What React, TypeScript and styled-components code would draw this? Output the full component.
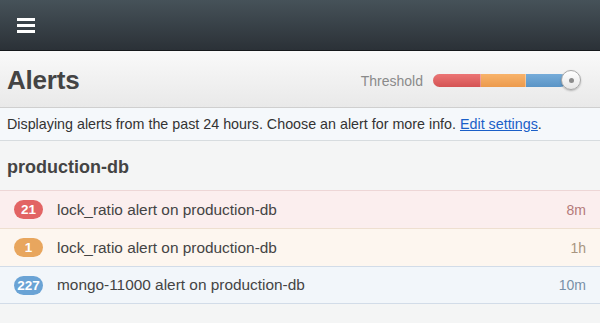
import React from "react";
import styled, { createGlobalStyle } from "styled-components";

const Global = createGlobalStyle`
  html, body { margin: 0; padding: 0; background: #f4f5f5; }
  body { font-family: "Helvetica Neue", "Liberation Sans", Arial, sans-serif; }
  * { box-sizing: border-box; }
`;

const Page = styled.div`
  width: 600px;
  height: 323px;
  background: #f4f5f5;
  overflow: hidden;
`;

const TopBar = styled.div`
  height: 51px;
  background: linear-gradient(#465259, #2b3137);
  border-bottom: 1px solid #15181b;
  display: flex;
  align-items: center;
  padding-left: 17px;
`;

const MenuButton = styled.div`
  width: 18px;
  display: flex;
  flex-direction: column;
  gap: 3px;
  span {
    display: block;
    height: 3px;
    background: #ffffff;
  }
`;

const Header = styled.div`
  height: 57px;
  background: linear-gradient(#f9f9f9, #e9e9e9);
  border-bottom: 1px solid #cfcfcf;
  display: flex;
  align-items: center;
  justify-content: space-between;
  padding: 2px 19px 0 7px;
`;

const Title = styled.h1`
  margin: 0;
  font-size: 26px;
  font-weight: bold;
  color: #444;
  letter-spacing: -0.2px;
`;

const ThresholdBox = styled.div`
  display: flex;
  align-items: center;
  gap: 10px;
`;

const ThresholdLabel = styled.span`
  font-size: 14px;
  color: #8a8a8a;
  padding-top: 2px;
`;

const Slider = styled.div`
  position: relative;
  width: 148px;
  height: 20px;
  display: flex;
  align-items: center;
`;

const Track = styled.div`
  display: flex;
  width: 134px;
  height: 13px;
  border-radius: 7px;
  overflow: hidden;
  box-shadow: inset 0 1px 1px rgba(0, 0, 0, 0.2);
`;

const Segment = styled.div<{ $w: number; $top: string; $bottom: string }>`
  width: ${(p) => p.$w}px;
  height: 100%;
  background: linear-gradient(${(p) => p.$top}, ${(p) => p.$bottom});
  border-right: 1px solid rgba(255, 255, 255, 0.35);
  &:last-child { border-right: none; }
`;

const Knob = styled.div`
  position: absolute;
  right: 0;
  top: 0;
  width: 20px;
  height: 20px;
  border-radius: 50%;
  background: linear-gradient(#ffffff, #e6e6e6);
  border: 1px solid #a8a8a8;
  box-shadow: 0 1px 2px rgba(0, 0, 0, 0.25);
  display: flex;
  align-items: center;
  justify-content: center;
  &::after {
    content: "";
    width: 5px;
    height: 5px;
    border-radius: 50%;
    background: #8a8a8a;
  }
`;

const InfoBar = styled.div`
  height: 33px;
  background: #f5f8fb;
  border-bottom: 1px solid #d7dcdf;
  display: flex;
  align-items: center;
  padding-left: 7px;
  font-size: 14.3px;
  color: #333;
  a {
    color: #1a5fc8;
    text-decoration: underline;
  }
`;

const GroupTitle = styled.h2`
  margin: 0;
  height: 49px;
  display: flex;
  align-items: center;
  padding: 4px 0 0 7px;
  font-size: 18px;
  font-weight: bold;
  color: #444;
`;

const List = styled.div`
  display: flex;
  flex-direction: column;
`;

type Level = "red" | "orange" | "blue";

const levels: Record<Level, { bg: string; border: string; badge: string; time: string }> = {
  red: { bg: "#fbeeee", border: "#edd6d6", badge: "#e26464", time: "#b47a7a" },
  orange: { bg: "#fdf6ef", border: "#eedfd0", badge: "#e8a65e", time: "#a89580" },
  blue: { bg: "#f2f6fa", border: "#d2dce8", badge: "#6aa3d5", time: "#7890a8" },
};

const Row = styled.div<{ $level: Level }>`
  height: 38px;
  display: flex;
  align-items: center;
  padding: 0 14px 0 14px;
  background: ${(p) => levels[p.$level].bg};
  border-top: 1px solid ${(p) => levels[p.$level].border};
  &:last-child {
    border-bottom: 1px solid ${(p) => levels[p.$level].border};
  }
`;

const BadgeCell = styled.div`
  width: 43px;
  flex: none;
  display: flex;
`;

const Badge = styled.span<{ $level: Level }>`
  min-width: 29px;
  height: 19px;
  padding: 0 3px;
  border-radius: 10px;
  background: ${(p) => levels[p.$level].badge};
  color: #fff;
  font-size: 13.5px;
  font-weight: bold;
  display: flex;
  align-items: center;
  justify-content: center;
`;

const RowText = styled.span`
  flex: 1;
  font-size: 15.4px;
  color: #444;
`;

const Time = styled.span<{ $level: Level }>`
  font-size: 14px;
  color: ${(p) => levels[p.$level].time};
`;

const alerts: { count: number; text: string; time: string; level: Level }[] = [
  { count: 21, text: "lock_ratio alert on production-db", time: "8m", level: "red" },
  { count: 1, text: "lock_ratio alert on production-db", time: "1h", level: "orange" },
  { count: 227, text: "mongo-11000 alert on production-db", time: "10m", level: "blue" },
];

export default function App() {
  return (
    <Page>
      <Global />
      <TopBar>
        <MenuButton>
          <span />
          <span />
          <span />
        </MenuButton>
      </TopBar>
      <Header>
        <Title>Alerts</Title>
        <ThresholdBox>
          <ThresholdLabel>Threshold</ThresholdLabel>
          <Slider>
            <Track>
              <Segment $w={48} $top="#ec7575" $bottom="#d45353" />
              <Segment $w={45} $top="#f8b36a" $bottom="#ec9a4c" />
              <Segment $w={41} $top="#76acd9" $bottom="#5a94c6" />
            </Track>
            <Knob />
          </Slider>
        </ThresholdBox>
      </Header>
      <InfoBar>
        <span>
          Displaying alerts from the past 24 hours. Choose an alert for more info.{" "}
          <a href="#">Edit settings</a>.
        </span>
      </InfoBar>
      <GroupTitle>production-db</GroupTitle>
      <List>
        {alerts.map((a, i) => (
          <Row key={i} $level={a.level}>
            <BadgeCell>
              <Badge $level={a.level}>{a.count}</Badge>
            </BadgeCell>
            <RowText>{a.text}</RowText>
            <Time $level={a.level}>{a.time}</Time>
          </Row>
        ))}
      </List>
    </Page>
  );
}
